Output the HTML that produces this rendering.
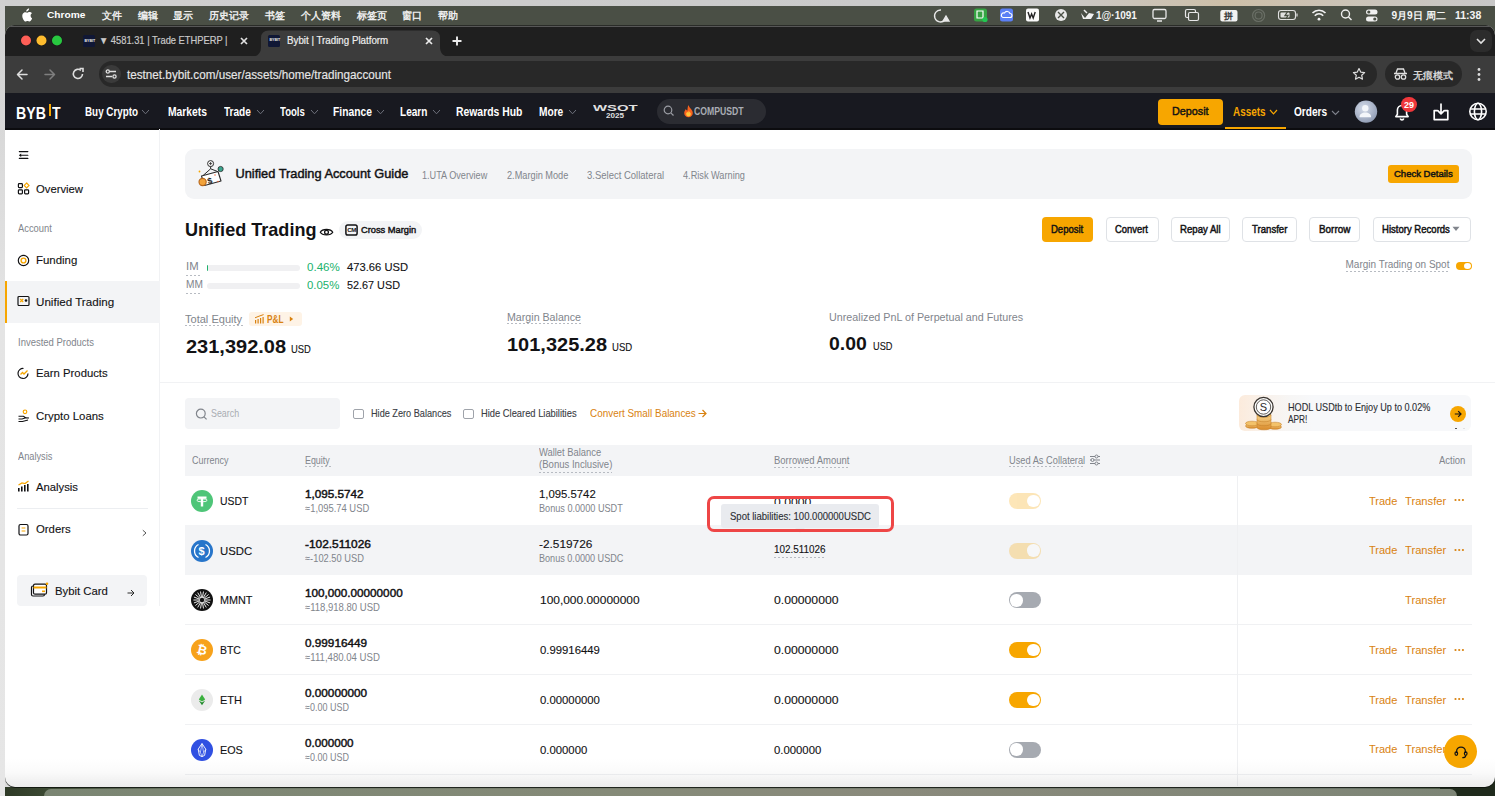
<!DOCTYPE html>
<html><head><meta charset="utf-8"><style>
html,body{margin:0;padding:0;width:1495px;height:796px;overflow:hidden;background:#dcdcdc}
body{position:relative;font-family:"Liberation Sans",sans-serif}
.a{position:absolute}
.t{position:absolute;white-space:nowrap;line-height:1;transform-origin:0 0}
#win{position:absolute;left:5px;top:25px;width:1490px;height:762px;box-shadow:0 1px 0 rgba(10,15,10,.8);border-radius:10px 10px 10px 10px;overflow:hidden;background:#fff}
#in{position:absolute;left:-5px;top:-25px;width:1495px;height:796px}
</style></head><body>
<div class="a" style="left:0px;top:0px;width:1495.00px;height:6.00px;background:linear-gradient(90deg,#cfcfcf,#c9c9c9 70%,#cdbfa8 82%,#c8c8c8);"></div><div class="a" style="left:0px;top:0px;width:5.00px;height:796.00px;background:linear-gradient(180deg,#d0d0d0,#e4e4e4 40%,#e6e6e6);"></div><div class="a" style="left:5px;top:6px;width:1490.00px;height:34.00px;background:#4a4f45;"></div><div class="a" style="left:5px;top:787px;width:1490.00px;height:9.00px;background:linear-gradient(90deg,#2e3a26,#3c4a33 3%,#6f7a69 12%,#7b806f 40%,#777d70 70%,#6d766a 90%,#3a4a30);"></div><div class="a" style="left:1440px;top:760px;width:55.00px;height:36.00px;background:#1f2a1c;"></div><div class="a" style="left:44px;top:789px;width:1413.00px;height:7.00px;background:linear-gradient(90deg,#7a8572,#858a78 40%,#8a8a7c 60%,#7d8576);border-radius:9px 9px 0 0"></div><svg class="a" style="left:20px;top:8px;" width="12" height="14" viewBox="0 0 12 14"><path d="M8.3 2.6c.5-.6.9-1.4.8-2.2-.8 0-1.6.5-2.1 1.1-.5.5-.9 1.3-.8 2.1.8.1 1.6-.4 2.1-1zM10.6 7.6c0-1.5 1.2-2.2 1.3-2.3-.7-1-1.8-1.2-2.2-1.2-.9-.1-1.8.6-2.3.6-.5 0-1.2-.5-2-.5C4.300 4.200 3.300 4.800 2.800 5.700c-1.100 1.900-.3 4.800.8 6.300.5.800 1.100 1.600 1.900 1.600.8 0 1.100-.5 2-.5.9 0 1.200.5 2 .5.8 0 1.300-.8 1.800-1.500.6-.8.8-1.600.8-1.700 0 0-1.500-.6-1.500-2.800z" fill="#fff"/></svg><svg class="a" style="left:0;top:0" width="1495" height="30" viewBox="0 0 1495 30"><g fill="none" stroke="#e8e8e8" stroke-width="1.3"><path d="M941 10a6 6 0 1 0 4 10"/><path d="M943 21l3-5 3 5z" fill="#e8e8e8"/></g><rect x="974" y="8.5" width="13" height="13" rx="2.5" fill="#36a343"/><path d="M977 11h6v7h-6z" fill="none" stroke="#fff" stroke-width="1.2"/><circle cx="985" cy="19.5" r="2.6" fill="#23c552"/><rect x="1000" y="8.5" width="13" height="13" rx="2.5" fill="#5b7ff5"/><path d="M1003 17.5h7a2 2 0 0 0 0-4 3 3 0 0 0-5.5-.5 2.2 2.2 0 0 0-1.5 4.5z" fill="none" stroke="#fff" stroke-width="1.1"/><rect x="1026" y="8.5" width="13" height="13" rx="2" fill="#fafafa"/><path d="M1028 12l2 6 1.6-4 1.6 4 2-6" fill="none" stroke="#222" stroke-width="1.4"/><circle cx="1061" cy="15" r="6" fill="#e8e8e8"/><path d="M1058 12l6 6M1064 12l-6 6" stroke="#4a4f45" stroke-width="1.4"/><path d="M1081 13l4 5 4-5 5 1-3 5h-8z" fill="#f0f0f0"/><path d="M1084 10l3 3" stroke="#f0f0f0" stroke-width="1.5"/><rect x="1153" y="9.5" width="13" height="9" rx="1.5" fill="none" stroke="#e8e8e8" stroke-width="1.3"/><path d="M1157 21h5" stroke="#e8e8e8" stroke-width="1.5"/><rect x="1185.5" y="9.5" width="10" height="8" rx="1.5" fill="none" stroke="#e8e8e8" stroke-width="1.2"/><rect x="1188.5" y="12.5" width="10" height="8" rx="1.5" fill="#4a4f45" stroke="#e8e8e8" stroke-width="1.2"/><rect x="1220.3" y="10" width="17.2" height="11.4" rx="2" fill="#f2f2f2"/><text x="1228.9" y="19" font-size="9" font-weight="700" text-anchor="middle" fill="#333" font-family="Liberation Sans">拼</text><g fill="none" stroke="#6a6f66" stroke-width="1.2"><circle cx="1258.6" cy="15.5" r="6"/><circle cx="1258.6" cy="15.5" r="3.5"/></g><rect x="1278.5" y="10.5" width="17" height="9" rx="2.5" fill="none" stroke="#e0e0e0" stroke-width="1.1"/><rect x="1280.5" y="12.5" width="9" height="5" rx="1" fill="#e0e0e0"/><path d="M1297 13.5v3" stroke="#e0e0e0" stroke-width="1.2"/><path d="M1288 11l-3 4.5h3l-2 3.5" stroke="#4a4f45" stroke-width="1.3" fill="none"/><g fill="none" stroke="#f2f2f2" stroke-width="1.6"><path d="M1312.5 13a9 9 0 0 1 13 0"/><path d="M1314.8 15.7a5.6 5.6 0 0 1 8.4 0"/></g><circle cx="1319" cy="19.2" r="1.4" fill="#f2f2f2"/><g fill="none" stroke="#f0f0f0" stroke-width="1.4"><circle cx="1345.5" cy="14" r="4"/><path d="M1348.5 17l3 3"/></g><g fill="#f0f0f0"><rect x="1366" y="9.5" width="11.5" height="5" rx="2.5"/><rect x="1366" y="16.5" width="11.5" height="5" rx="2.5"/></g><circle cx="1368.8" cy="12" r="1.6" fill="#4a4f45"/><circle cx="1374.8" cy="19" r="1.6" fill="#4a4f45"/></svg><span class="t" style="left:47.10px;top:9px;font-size:9.9px;line-height:11px;color:#ffffff;font-weight:700;transform:scaleX(1.029);">Chrome</span><span class="t" style="left:102.00px;top:10px;font-size:10.2px;line-height:11px;color:#f4f4f4;-webkit-text-stroke:0.35px #f4f4f4;">文件</span><span class="t" style="left:138.00px;top:10px;font-size:10.2px;line-height:11px;color:#f4f4f4;-webkit-text-stroke:0.35px #f4f4f4;">编辑</span><span class="t" style="left:173.40px;top:10px;font-size:10.2px;line-height:11px;color:#f4f4f4;-webkit-text-stroke:0.35px #f4f4f4;">显示</span><span class="t" style="left:208.70px;top:10px;font-size:10.2px;line-height:11px;color:#f4f4f4;-webkit-text-stroke:0.35px #f4f4f4;">历史记录</span><span class="t" style="left:265.00px;top:10px;font-size:10.2px;line-height:11px;color:#f4f4f4;-webkit-text-stroke:0.35px #f4f4f4;">书签</span><span class="t" style="left:300.80px;top:10px;font-size:10.2px;line-height:11px;color:#f4f4f4;-webkit-text-stroke:0.35px #f4f4f4;">个人资料</span><span class="t" style="left:357.30px;top:10px;font-size:10.2px;line-height:11px;color:#f4f4f4;-webkit-text-stroke:0.35px #f4f4f4;">标签页</span><span class="t" style="left:402.20px;top:10px;font-size:10.2px;line-height:11px;color:#f4f4f4;-webkit-text-stroke:0.35px #f4f4f4;">窗口</span><span class="t" style="left:438.20px;top:10px;font-size:10.2px;line-height:11px;color:#f4f4f4;-webkit-text-stroke:0.35px #f4f4f4;">帮助</span><span class="t" style="left:1096.00px;top:10px;font-size:10px;line-height:11px;color:#f4f4f4;font-weight:700;">1@·1091</span><span class="t" style="left:1391.40px;top:10px;font-size:10.2px;line-height:11px;color:#f4f4f4;font-weight:700;">9月9日 周二</span><span class="t" style="left:1454.50px;top:10px;font-size:10px;line-height:11px;color:#f4f4f4;font-weight:700;transform:scaleX(1.049);">11:38</span><div id="win"><div id="in"><div class="a" style="left:5px;top:25px;width:1490.00px;height:31.00px;background:#1f1f1f;"></div><div class="a" style="left:5px;top:25px;width:1490.00px;height:0.80px;background:#2a2c28;"></div><div class="a" style="left:5px;top:25.8px;width:1490.00px;height:1.40px;background:#575757;"></div><div class="a" style="left:5px;top:56px;width:1490.00px;height:36.60px;background:#3c3c3c;"></div><div class="a" style="left:5px;top:92.6px;width:1490.00px;height:37.00px;background:#181920;"></div><div class="a" style="left:5px;top:128px;width:1490.00px;height:1.60px;background:#0c0c0f;"></div><svg class="a" style="left:18px;top:32px;" width="48" height="17" viewBox="0 0 48 17"><circle cx="8" cy="8.5" r="5.5" fill="#1a1a1a"/><circle cx="23.5" cy="8.5" r="5.5" fill="#1a1a1a"/><circle cx="39" cy="8.5" r="5.5" fill="#1a1a1a"/><circle cx="8" cy="8.5" r="5.0" fill="#fe5f57"/><circle cx="23.5" cy="8.5" r="5.0" fill="#febc2e"/><circle cx="39" cy="8.5" r="5.0" fill="#28c840"/></svg><svg class="a" style="left:250px;top:29.5px;" width="210" height="27" viewBox="0 0 210 27"><path d="M0 27 Q11 27 11 17 V8 Q11 0.5 19 0.5 H182 Q190 0.5 190 8 V17 Q190 27 201 27 Z" fill="#3c3c3c"/></svg><div class="a" style="left:83px;top:35px;width:12.00px;height:12.00px;background:#101735;border-radius:1.5px"></div><span class="t" style="left:84.5px;top:39.6px;font-size:3.6px;font-weight:700;color:#e8e8e8">BYBIT</span><div class="a" style="left:268px;top:34.8px;width:12.00px;height:12.00px;background:#101735;border-radius:1.5px"></div><span class="t" style="left:269.5px;top:39.4px;font-size:3.6px;font-weight:700;color:#e8e8e8">BYBIT</span><svg class="a" style="left:238px;top:35px;" width="12" height="12" viewBox="0 0 12 12"><path d="M3 3l6 6M9 3l-6 6" stroke="#e0e0e0" stroke-width="1.7"/></svg><svg class="a" style="left:423px;top:35px;" width="12" height="12" viewBox="0 0 12 12"><path d="M3 3l6 6M9 3l-6 6" stroke="#ececec" stroke-width="1.7"/></svg><svg class="a" style="left:450px;top:34px;" width="14" height="14" viewBox="0 0 14 14"><path d="M7 2.5v9M2.5 7h9" stroke="#eeeeee" stroke-width="1.9"/></svg><div class="a" style="left:1470px;top:30px;width:21.50px;height:22.00px;background:#2c2c2c;border-radius:7px"></div><svg class="a" style="left:1475px;top:36px;" width="12" height="10" viewBox="0 0 12 10"><polyline points="2,3 6,7 10,3" fill="none" stroke="#e0e0e0" stroke-width="1.6"/></svg><svg class="a" style="left:14px;top:67px;" width="60" height="15" viewBox="0 0 60 15"><g fill="none" stroke-width="1.5" stroke-linecap="round" stroke-linejoin="round"><path d="M13 7.5H4M8 3L3.5 7.5 8 12" stroke="#dedede"/><path d="M31 7.5h9M36 3l4.5 4.5L36 12" stroke="#7f7f7f"/></g></svg><svg class="a" style="left:71px;top:66px;" width="14" height="16" viewBox="0 0 14 16"><path d="M11.5 8a4.6 4.6 0 1 1-1.6-3.6" fill="none" stroke="#dedede" stroke-width="1.6"/><path d="M8.5 2.5h3.5v3.5" fill="none" stroke="#dedede" stroke-width="1.6"/></svg><div class="a" style="left:98.6px;top:61.2px;width:1278.40px;height:25.80px;background:#282828;border-radius:13px"></div><div class="a" style="left:102.3px;top:64.8px;width:18.50px;height:18.40px;background:#3a3a3a;border-radius:50%"></div><svg class="a" style="left:105px;top:68px;" width="13" height="12" viewBox="0 0 13 12"><g stroke="#e0e0e0" stroke-width="1.3" fill="none"><path d="M5 3.5h6M1 8.5h6"/><circle cx="2.8" cy="3.5" r="1.6"/><circle cx="9.5" cy="8.5" r="1.6"/></g></svg><svg class="a" style="left:1352px;top:67px;" width="14" height="14" viewBox="0 0 14 14"><path d="M7 1.5l1.7 3.6 3.9.5-2.9 2.7.8 3.9L7 10.3l-3.5 1.9.8-3.9L1.4 5.6l3.9-.5z" fill="none" stroke="#dcdcdc" stroke-width="1.2" stroke-linejoin="round"/></svg><div class="a" style="left:1385px;top:61.2px;width:77.00px;height:25.80px;background:#282828;border-radius:13px"></div><svg class="a" style="left:1393px;top:67px;" width="15" height="14" viewBox="0 0 15 14"><g fill="none" stroke="#e0e0e0" stroke-width="1.3"><path d="M3 6l1.5-4h6L12 6"/><path d="M1 6.5h13"/><circle cx="4.5" cy="10" r="2.2"/><circle cx="10.5" cy="10" r="2.2"/></g></svg><svg class="a" style="left:1476px;top:66px;" width="6" height="18" viewBox="0 0 6 18"><g fill="#dcdcdc"><circle cx="3" cy="3.5" r="1.4"/><circle cx="3" cy="8.5" r="1.4"/><circle cx="3" cy="13.5" r="1.4"/></g></svg><div class="a" style="left:48.6px;top:104px;width:2.30px;height:12.00px;background:#f7a600;"></div><svg class="a" style="left:141px;top:108.6px;" width="9" height="5.8" viewBox="0 0 9 5.8"><polyline points="1,1 4.5,4.8 8,1" fill="none" stroke="#6e717b" stroke-width="1.0"/></svg><svg class="a" style="left:256px;top:108.6px;" width="9" height="5.8" viewBox="0 0 9 5.8"><polyline points="1,1 4.5,4.8 8,1" fill="none" stroke="#6e717b" stroke-width="1.0"/></svg><svg class="a" style="left:310px;top:108.6px;" width="9" height="5.8" viewBox="0 0 9 5.8"><polyline points="1,1 4.5,4.8 8,1" fill="none" stroke="#6e717b" stroke-width="1.0"/></svg><svg class="a" style="left:376px;top:108.6px;" width="9" height="5.8" viewBox="0 0 9 5.8"><polyline points="1,1 4.5,4.8 8,1" fill="none" stroke="#6e717b" stroke-width="1.0"/></svg><svg class="a" style="left:432px;top:108.6px;" width="9" height="5.8" viewBox="0 0 9 5.8"><polyline points="1,1 4.5,4.8 8,1" fill="none" stroke="#6e717b" stroke-width="1.0"/></svg><svg class="a" style="left:568px;top:108.6px;" width="9" height="5.8" viewBox="0 0 9 5.8"><polyline points="1,1 4.5,4.8 8,1" fill="none" stroke="#6e717b" stroke-width="1.0"/></svg><div class="a" style="left:657px;top:99px;width:108.50px;height:25.00px;background:#2b2c32;border-radius:12.5px"></div><svg class="a" style="left:663px;top:105px;" width="12" height="12" viewBox="0 0 12 12"><circle cx="5" cy="5" r="3.8" fill="none" stroke="#9b9da4" stroke-width="1.2"/><path d="M7.8 7.8l2.7 2.7" stroke="#9b9da4" stroke-width="1.2"/></svg><svg class="a" style="left:683px;top:104px;" width="11" height="14" viewBox="0 0 11 14"><path d="M5.5 1C6 4 9.8 5.5 9.8 9a4.3 4.3 0 0 1-8.6 0c0-2 1.2-3 1.6-4 .5 1.2 1.2 1.6 1.6 1.6C4.600 5 4.600 2.500 5.500 1z" fill="#f7611e"/><path d="M5.5 6.5c.4 1.2 2.4 2 2.4 3.6a2.4 2.4 0 0 1-4.8 0c0-1.200.9-1.600 1.200-2.300.3.600.8.800 1.200.600z" fill="#ffc53a"/></svg><div class="a" style="left:1158px;top:98.8px;width:64.60px;height:25.80px;background:#f7a600;border-radius:4px"></div><svg class="a" style="left:1269px;top:108.8px;" width="9" height="5.8" viewBox="0 0 9 5.8"><polyline points="1,1 4.5,4.8 8,1" fill="none" stroke="#f7a600" stroke-width="1.2"/></svg><svg class="a" style="left:1330.5px;top:110px;" width="9" height="5.5" viewBox="0 0 9 5.5"><polyline points="1,1 4.5,4.5 8,1" fill="none" stroke="#7d808a" stroke-width="1.1"/></svg><div class="a" style="left:1225px;top:127px;width:61.00px;height:2.00px;background:#f7a600;"></div><svg class="a" style="left:1354px;top:100px;" width="24" height="24" viewBox="0 0 24 24"><defs><radialGradient id="av" cx="40%" cy="35%" r="70%"><stop offset="0" stop-color="#d5dcea"/><stop offset="1" stop-color="#8f9bb3"/></radialGradient></defs><circle cx="12" cy="11.6" r="11.2" fill="url(#av)"/><circle cx="11.3" cy="8.2" r="3.2" fill="#f4f6fa"/><path d="M5.5 17.2c0-3 2.6-4.6 5.8-4.6s5.8 1.600 5.800 4.600z" fill="#f4f6fa"/></svg><svg class="a" style="left:1393px;top:102px;" width="18" height="20" viewBox="0 0 18 20"><path d="M9 3.5a4.6 4.6 0 0 0-4.6 4.6v4.2L2.8 14.6h12.400L13.600 12.300V8.100A4.600 4.600 0 0 0 9 3.500z" fill="none" stroke="#fff" stroke-width="1.6" stroke-linejoin="round"/><path d="M7.200 16.600a1.900 1.900 0 0 0 3.600 0" fill="none" stroke="#fff" stroke-width="1.6"/></svg><div class="a" style="left:1401.2px;top:96.6px;width:15.60px;height:15.60px;background:#f0373b;border-radius:50%"></div><svg class="a" style="left:1431px;top:102px;" width="20" height="20" viewBox="0 0 20 20"><g fill="none" stroke="#fff" stroke-width="1.7" stroke-linejoin="round" stroke-linecap="round"><path d="M6 8.6H3.2v9h13.600v-9H14"/><path d="M10 2.2v9.6M6.800 8.600L10 11.800l3.200-3.200"/></g></svg><svg class="a" style="left:1468px;top:101px;" width="20" height="21" viewBox="0 0 20 21"><g fill="none" stroke="#fff" stroke-width="1.6"><circle cx="10" cy="10.5" r="8.2"/><ellipse cx="10" cy="10.5" rx="3.6" ry="8.2"/><path d="M2 8h16M2 13h16"/></g></svg><div class="a" style="left:159.3px;top:128.6px;width:1.00px;height:477.40px;background:#f1f2f4;"></div><svg class="a" style="left:17px;top:149px;" width="13" height="12" viewBox="0 0 13 12"><g stroke="#121214" stroke-width="1.1" fill="none" stroke-linecap="round"><path d="M2.3 2.600h8.600M3.500 6.200h7.400M2.300 9.400h8.600"/></g><path d="M1.800 6.200L4.200 4.500V7.900z" fill="#121214"/></svg><svg class="a" style="left:17px;top:182px;" width="13" height="13" viewBox="0 0 13 13"><g fill="none" stroke-width="1.2"><rect x="1.4" y="1.6" width="4" height="4" rx=".8" stroke="#121214"/><rect x="1.4" y="7.8" width="4" height="4" rx=".8" stroke="#121214"/><rect x="7.6" y="7.8" width="4" height="4" rx=".8" stroke="#121214"/><path d="M9.6 1l2.400 2.400-2.400 2.400-2.400-2.400z" stroke="#f7a600"/></g></svg><svg class="a" style="left:17px;top:254px;" width="13" height="13" viewBox="0 0 13 13"><circle cx="6.5" cy="6.5" r="5.2" fill="none" stroke="#121214" stroke-width="1.2"/><circle cx="6.5" cy="6.5" r="2.4" fill="none" stroke="#f7a600" stroke-width="1.4"/></svg><div class="a" style="left:5px;top:280.7px;width:155.00px;height:42.30px;background:#f3f4f6;"></div><div class="a" style="left:5px;top:280.7px;width:2.20px;height:42.30px;background:#f7a600;"></div><svg class="a" style="left:17px;top:295px;" width="13" height="12" viewBox="0 0 13 12"><rect x="1" y="1.5" width="11" height="9" rx="1" fill="none" stroke="#121214" stroke-width="1.2"/><path d="M3.2 4l3 3M6.2 4l-3 3" stroke="#f7a600" stroke-width="1.2"/><circle cx="9" cy="5.5" r="1.3" fill="#121214"/></svg><svg class="a" style="left:17px;top:367px;" width="13" height="13" viewBox="0 0 13 13"><path d="M11 6.5A5 5 0 1 1 6.5 1.5" fill="none" stroke="#121214" stroke-width="1.2"/><path d="M3.5 7.5l2-2 1.5 1.5 3.5-3.5" fill="none" stroke="#f7a600" stroke-width="1.3"/></svg><svg class="a" style="left:17px;top:409px;" width="14" height="14" viewBox="0 0 14 14"><circle cx="8" cy="2.8" r="1.8" fill="none" stroke="#f7a600" stroke-width="1.2"/><path d="M1.5 7.2h5l2 1.5M1.5 10h3.500l4-1.300 3 .300M1.500 12.500h4l5.500-1.500" fill="none" stroke="#121214" stroke-width="1.1"/></svg><svg class="a" style="left:17px;top:480px;" width="13" height="13" viewBox="0 0 13 13"><g fill="#121214"><rect x="1" y="8" width="1.6" height="3.5"/><rect x="4" y="6.5" width="1.6" height="5"/><rect x="7" y="5" width="1.6" height="6.5"/><rect x="10" y="4" width="1.6" height="7.5"/></g><path d="M1.5 5L5 3 8 3.5 11.5 1" fill="none" stroke="#f7a600" stroke-width="1.2"/></svg><div class="a" style="left:17.4px;top:508px;width:130.60px;height:1.00px;background:#eceef1;"></div><svg class="a" style="left:17px;top:523px;" width="13" height="13" viewBox="0 0 13 13"><rect x="2" y="1.5" width="9" height="10.5" rx="1.5" fill="none" stroke="#121214" stroke-width="1.2"/><path d="M4.6 5h3.8M4.6 8h3.8" stroke="#f7a600" stroke-width="1.2"/></svg><svg class="a" style="left:141px;top:528.5px;" width="7" height="8" viewBox="0 0 7 8"><polyline points="1.8,1.2 5,4 1.8,6.8" fill="none" stroke="#555" stroke-width="1"/></svg><div class="a" style="left:17.4px;top:575.3px;width:129.40px;height:30.60px;background:#f3f4f6;border-radius:4px"></div><svg class="a" style="left:30px;top:582px;" width="19" height="16" viewBox="0 0 19 16"><rect x="1.5" y="4" width="13" height="10" rx="1.5" fill="#fff" stroke="#121214" stroke-width="1.2"/><rect x="3.5" y="2.2" width="13" height="10" rx="1.5" fill="#fff" stroke="#121214" stroke-width="1.2"/><path d="M3.5 5.5h13" stroke="#f7a600" stroke-width="2"/><circle cx="17" cy="1.8" r="1.3" fill="#f7a600"/><rect x="12" y="8.5" width="3" height="1.6" fill="#f7a600"/></svg><svg class="a" style="left:126px;top:587.7px;" width="10" height="10" viewBox="0 0 10 10"><path d="M1.5 5h6.5M5 2l3 3-3 3" fill="none" stroke="#2a2a2a" stroke-width="1"/></svg><div class="a" style="left:185px;top:149.3px;width:1286.50px;height:49.60px;background:#f3f4f6;border-radius:9px"></div><svg class="a" style="left:195px;top:157px;" width="30" height="32" viewBox="0 0 30 32"><path d="M6.5 19l16.500-4.500 3 9.500-16.500 4.500z" fill="#fff" stroke="#2a2a2a" stroke-width="1.1" stroke-linejoin="round"/><path d="M8 18.600l7.600-6.800 7 2.700" fill="none" stroke="#2a2a2a" stroke-width="1"/><text x="12.2" y="26.6" font-size="8.5" font-weight="700" fill="#222" font-family="Liberation Sans" transform="rotate(-15 15 23)">$</text><circle cx="15.6" cy="6.6" r="3" fill="#fff" stroke="#2a2a2a" stroke-width="1"/><path d="M15.600 5v3.200M14 6.600h3.200" stroke="#2a2a2a" stroke-width=".8"/><path d="M15.600 9.600v2.200" stroke="#2a2a2a" stroke-width="1"/><circle cx="25.6" cy="12" r="2.600" fill="#3aa58f" stroke="#2a2a2a" stroke-width=".8"/><circle cx="7.6" cy="25" r="3.600" fill="#f2a33a" stroke="#b5651a" stroke-width="1.1"/><circle cx="4.500" cy="14.500" r=".9" fill="#f7a600"/><circle cx="20" cy="18" r=".7" fill="#f05a28"/><circle cx="23" cy="24.500" r=".7" fill="#f05a28"/></svg><div class="a" style="left:1388px;top:164.7px;width:71.10px;height:18.00px;background:#f7a600;border-radius:3px"></div><svg class="a" style="left:319px;top:226px;" width="15" height="12" viewBox="0 0 15 12"><path d="M1.3 6.2C3.300 2.600 11.700 2.600 13.700 6.200 11.700 9.800 3.300 9.800 1.300 6.200z" fill="none" stroke="#121214" stroke-width="1.3"/><circle cx="7.5" cy="6.2" r="1.9" fill="none" stroke="#121214" stroke-width="1.3"/></svg><div class="a" style="left:338.6px;top:220.7px;width:83.40px;height:18.30px;background:#f3f4f6;border-radius:9px"></div><svg class="a" style="left:344.5px;top:223.5px;" width="13" height="12" viewBox="0 0 13 12"><rect x="0.9" y="0.9" width="11.2" height="10.2" rx="1.8" fill="none" stroke="#121214" stroke-width="1.5"/><text x="6.5" y="8.4" text-anchor="middle" font-size="6.2" font-weight="700" fill="#121214" font-family="Liberation Sans" letter-spacing="-0.5">CM</text></svg><div class="a" style="left:1041.5px;top:217.4px;width:51.80px;height:24.30px;background:#f7a600;border-radius:4px"></div><div class="a" style="left:1106px;top:217.4px;width:52.80px;height:24.30px;background:#fff;border-radius:4px;box-sizing:border-box;border:1px solid #dfe2e6"></div><div class="a" style="left:1171.3px;top:217.4px;width:58.40px;height:24.30px;background:#fff;border-radius:4px;box-sizing:border-box;border:1px solid #dfe2e6"></div><div class="a" style="left:1242.4px;top:217.4px;width:54.30px;height:24.30px;background:#fff;border-radius:4px;box-sizing:border-box;border:1px solid #dfe2e6"></div><div class="a" style="left:1309.3px;top:217.4px;width:50.30px;height:24.30px;background:#fff;border-radius:4px;box-sizing:border-box;border:1px solid #dfe2e6"></div><div class="a" style="left:1372.5px;top:217.4px;width:98.80px;height:24.30px;background:#fff;border-radius:4px;box-sizing:border-box;border:1px solid #dfe2e6"></div><svg class="a" style="left:1452px;top:226px;" width="8" height="6" viewBox="0 0 8 6"><path d="M0.5 0.8h7L4 5z" fill="#81858c"/></svg><div class="a" style="left:1345.5px;top:271px;width:104.50px;height:1px;background:repeating-linear-gradient(90deg,#b7bbc2 0 2px,transparent 2px 4px)"></div><div class="a" style="left:1455.8px;top:261.6px;width:16.00px;height:8.20px;background:#f7a600;border-radius:4.1px"></div><div class="a" style="left:1463.6px;top:262.5px;width:7.30px;height:6.40px;background:#fff;border-radius:50%"></div><div class="a" style="left:206.8px;top:264.7px;width:93.20px;height:6.20px;background:#f0f0f2;border-radius:3.1px"></div><div class="a" style="left:206.8px;top:282.6px;width:93.20px;height:6.20px;background:#f0f0f2;border-radius:3.1px"></div><div class="a" style="left:206.8px;top:264.7px;width:1.50px;height:6.20px;background:#20b26c;border-radius:3px 0 0 3px"></div><div class="a" style="left:186px;top:275.4px;width:16.00px;height:1px;background:repeating-linear-gradient(90deg,#b7bbc2 0 2px,transparent 2px 4px)"></div><div class="a" style="left:186px;top:293.4px;width:16.00px;height:1px;background:repeating-linear-gradient(90deg,#b7bbc2 0 2px,transparent 2px 4px)"></div><div class="a" style="left:185.4px;top:324.6px;width:57.20px;height:1px;background:repeating-linear-gradient(90deg,#b7bbc2 0 2px,transparent 2px 4px)"></div><div class="a" style="left:249.3px;top:312px;width:53.10px;height:13.70px;background:#fef3e6;border-radius:3px"></div><svg class="a" style="left:254px;top:314px;" width="12" height="10" viewBox="0 0 12 10"><g fill="#d98210"><rect x="1" y="6" width="1.2" height="3.5"/><rect x="3.5" y="5" width="1.2" height="4.5"/><rect x="6" y="4" width="1.2" height="5.5"/><rect x="8.5" y="3" width="1.2" height="6.5"/></g><path d="M1 3.8L5 2.2 9.600 .6" fill="none" stroke="#d98210" stroke-width="1"/></svg><svg class="a" style="left:289px;top:316px;" width="5" height="6" viewBox="0 0 5 6"><path d="M0.8 0.5v5L4.2 3z" fill="#d98210"/></svg><div class="a" style="left:507.4px;top:323.4px;width:73.90px;height:1px;background:repeating-linear-gradient(90deg,#b7bbc2 0 2px,transparent 2px 4px)"></div><div class="a" style="left:160.3px;top:382px;width:1334.70px;height:1.00px;background:#f1f2f4;"></div><div class="a" style="left:185.3px;top:398.3px;width:155.00px;height:30.60px;background:#f3f4f6;border-radius:4px"></div><svg class="a" style="left:195px;top:408px;" width="13" height="13" viewBox="0 0 13 13"><circle cx="5.8" cy="5.6" r="4.4" fill="none" stroke="#81858c" stroke-width="1.2"/><path d="M9 8.8l2.6 2.6" stroke="#81858c" stroke-width="1.2"/></svg><div class="a" style="left:353.1px;top:408.5px;width:10.80px;height:10.70px;background:#fff;border-radius:2px;box-sizing:border-box;border:1px solid #9fa3aa"></div><div class="a" style="left:463.2px;top:408.5px;width:10.80px;height:10.70px;background:#fff;border-radius:2px;box-sizing:border-box;border:1px solid #9fa3aa"></div><svg class="a" style="left:697px;top:408px;" width="11" height="11" viewBox="0 0 11 11"><path d="M1.5 5.5h7.5M5.5 2l3.5 3.500L5.500 9" fill="none" stroke="#d98210" stroke-width="1.2"/></svg><div class="a" style="left:1238.7px;top:395.3px;width:232.50px;height:36.20px;background:linear-gradient(90deg,#fcebdc 0,#f9f1ea 10%,#f7f6f5 22%,#f7f8fa 32%,#f7f8fa 100%);border-radius:6px"></div><svg class="a" style="left:1244px;top:396px;" width="40" height="36" viewBox="0 0 40 36"><defs><linearGradient id="gc" x1="0" y1="0" x2="0" y2="1"><stop offset="0" stop-color="#f8d48a"/><stop offset="1" stop-color="#d98a2a"/></linearGradient></defs><g stroke="#c07a22" stroke-width=".5"><ellipse cx="8" cy="30" rx="6.500" ry="2.300" fill="url(#gc)"/><ellipse cx="8" cy="27.500" rx="6.500" ry="2.300" fill="#f3c26a"/><ellipse cx="31" cy="31" rx="6.500" ry="2.300" fill="url(#gc)"/><ellipse cx="31" cy="28.500" rx="6.500" ry="2.300" fill="#f3c26a"/><path d="M13 19h14v12.500a7 2.300 0 0 1-14 0z" fill="url(#gc)"/><ellipse cx="20" cy="19" rx="7" ry="2.300" fill="#f8d080"/><path d="M13 23.500a7 2.300 0 0 0 14 0M13 27.500a7 2.300 0 0 0 14 0" fill="none"/></g><circle cx="19.500" cy="11" r="9.600" fill="#fdfdfd" stroke="#3a3530" stroke-width="1.300"/><circle cx="19.500" cy="11" r="7.200" fill="none" stroke="#3a3530" stroke-width=".8"/><text x="15.800" y="15.200" font-size="11" fill="#2a2a2a" font-family="Liberation Sans">S</text></svg><div class="a" style="left:1449.5px;top:405.5px;width:16.00px;height:16.00px;background:#f7a600;border-radius:50%"></div><svg class="a" style="left:1452.5px;top:408.5px;" width="10" height="10" viewBox="0 0 10 10"><path d="M1.8 5h6.2M5.2 2.2L8 5 5.200 7.800" fill="none" stroke="#121214" stroke-width="1.2"/></svg><div class="a" style="left:1455px;top:427.6px;width:2.00px;height:1.60px;background:#333;border-radius:50%"></div><div class="a" style="left:1463px;top:427.6px;width:2.00px;height:1.60px;background:#ddd;border-radius:50%"></div><div class="a" style="left:185.2px;top:444.9px;width:1286.60px;height:30.70px;background:#f3f4f6;"></div><div class="a" style="left:305.2px;top:466px;width:25.40px;height:1px;background:repeating-linear-gradient(90deg,#b7bbc2 0 2px,transparent 2px 4px)"></div><div class="a" style="left:539.3px;top:472.3px;width:73.00px;height:1px;background:repeating-linear-gradient(90deg,#b7bbc2 0 2px,transparent 2px 4px)"></div><div class="a" style="left:774.2px;top:466.6px;width:76.00px;height:1px;background:repeating-linear-gradient(90deg,#b7bbc2 0 2px,transparent 2px 4px)"></div><div class="a" style="left:1008.9px;top:466px;width:76.40px;height:1px;background:repeating-linear-gradient(90deg,#b7bbc2 0 2px,transparent 2px 4px)"></div><svg class="a" style="left:1089px;top:454px;" width="12" height="12" viewBox="0 0 12 12"><g stroke="#81858c" stroke-width="1" fill="none"><path d="M1 2.5h10M1 6h10M1 9.5h10"/><circle cx="7.5" cy="2.5" r="1.5" fill="#f3f4f6"/><circle cx="3.5" cy="6" r="1.5" fill="#f3f4f6"/><circle cx="7.5" cy="9.5" r="1.5" fill="#f3f4f6"/></g></svg><div class="a" style="left:185.2px;top:525.35px;width:1286.60px;height:49.75px;background:#f3f4f6;"></div><div class="a" style="left:185.2px;top:624.35px;width:1286.60px;height:1.00px;background:#f0f1f3;"></div><div class="a" style="left:185.2px;top:674.1px;width:1286.60px;height:1.00px;background:#f0f1f3;"></div><div class="a" style="left:185.2px;top:723.85px;width:1286.60px;height:1.00px;background:#f0f1f3;"></div><div class="a" style="left:185.2px;top:773.6px;width:1286.60px;height:1.00px;background:#f0f1f3;"></div><div class="a" style="left:1237px;top:475.6px;width:1.00px;height:310.40px;background:#eff0f2;"></div><svg class="a" style="left:191px;top:489.8px;" width="22" height="22" viewBox="0 0 22 22"><circle cx="11" cy="11" r="11" fill="#4ec578"/><path d="M6.5 6.6h9v2.2h-3.3v7.800h-2.400V8.800H6.500z" fill="#fff"/><ellipse cx="11" cy="10.3" rx="5.2" ry="1.5" fill="none" stroke="#fff" stroke-width=".9"/></svg><svg class="a" style="left:191px;top:539.5500000000001px;" width="22" height="22" viewBox="0 0 22 22"><circle cx="11" cy="11" r="11" fill="#2775ca"/><path d="M7.5 4.5a7.3 7.3 0 0 0 0 13M14.5 4.5a7.300 7.300 0 0 1 0 13" fill="none" stroke="#fff" stroke-width="1.3"/><circle cx="11" cy="11" r="5.8" fill="none" stroke="#fff" stroke-width="0"/><text x="7.6" y="15.2" font-size="11" font-weight="700" fill="#fff" font-family="Liberation Sans">$</text></svg><svg class="a" style="left:191px;top:589.3000000000001px;" width="22" height="22" viewBox="0 0 22 22"><circle cx="11" cy="11" r="11" fill="#111"/><path d="M11 11L19.60 11.00" stroke="#fff" stroke-width=".9"/><path d="M11 11L19.08 13.94" stroke="#fff" stroke-width=".9"/><path d="M11 11L17.59 16.53" stroke="#fff" stroke-width=".9"/><path d="M11 11L15.30 18.45" stroke="#fff" stroke-width=".9"/><path d="M11 11L12.50 19.47" stroke="#fff" stroke-width=".9"/><path d="M11 11L9.51 19.47" stroke="#fff" stroke-width=".9"/><path d="M11 11L6.70 18.45" stroke="#fff" stroke-width=".9"/><path d="M11 11L4.41 16.53" stroke="#fff" stroke-width=".9"/><path d="M11 11L2.92 13.95" stroke="#fff" stroke-width=".9"/><path d="M11 11L2.40 11.01" stroke="#fff" stroke-width=".9"/><path d="M11 11L2.92 8.06" stroke="#fff" stroke-width=".9"/><path d="M11 11L4.41 5.48" stroke="#fff" stroke-width=".9"/><path d="M11 11L6.69 3.56" stroke="#fff" stroke-width=".9"/><path d="M11 11L9.50 2.53" stroke="#fff" stroke-width=".9"/><path d="M11 11L12.49 2.53" stroke="#fff" stroke-width=".9"/><path d="M11 11L15.29 3.55" stroke="#fff" stroke-width=".9"/><path d="M11 11L17.58 5.47" stroke="#fff" stroke-width=".9"/><path d="M11 11L19.08 8.05" stroke="#fff" stroke-width=".9"/><circle cx="11" cy="11" r="2.2" fill="#111"/></svg><svg class="a" style="left:191px;top:639.0500000000001px;" width="22" height="22" viewBox="0 0 22 22"><circle cx="11" cy="11" r="11" fill="#f7a21b"/><text x="11" y="15.2" text-anchor="middle" font-size="12.5" font-weight="700" fill="#fff" font-family="Liberation Sans" transform="rotate(14 11 11)">₿</text></svg><svg class="a" style="left:191px;top:688.8000000000001px;" width="22" height="22" viewBox="0 0 22 22"><circle cx="11" cy="11" r="11" fill="#ebebeb"/><path d="M11 5.5l3.2 5-3.200 2-3.200-2z" fill="#3ab03e"/><path d="M7.8 11.4l3.2 2 3.2-2L11 16.200z" fill="#1f8a2a"/></svg><svg class="a" style="left:191px;top:738.5500000000001px;" width="22" height="22" viewBox="0 0 22 22"><circle cx="11" cy="11" r="11" fill="#3050e2"/><path d="M11 4.600L14.800 10.200 13.600 16.400 11 17.600 8.400 16.400 7.200 10.200z" fill="none" stroke="#fff" stroke-width=".9" stroke-linejoin="round"/><path d="M11 4.600L9.400 13.400 11 17.600 12.600 13.400z M7.200 10.200L9.400 13.400M14.800 10.200L12.600 13.400" fill="none" stroke="#fff" stroke-width=".6"/></svg><div class="a" style="left:1008.6px;top:492.90px;width:32.6px;height:16px;border-radius:8px;background:#f7a600;opacity:.28"><div class="a" style="left:18.6px;top:1.8px;width:12.4px;height:12.4px;border-radius:50%;background:#fff"></div></div><div class="a" style="left:1008.6px;top:542.65px;width:32.6px;height:16px;border-radius:8px;background:#f7a600;opacity:.28"><div class="a" style="left:18.6px;top:1.8px;width:12.4px;height:12.4px;border-radius:50%;background:#fff"></div></div><div class="a" style="left:1008.6px;top:592.40px;width:32.6px;height:16px;border-radius:8px;background:#a6aab1"><div class="a" style="left:1.8px;top:1.8px;width:12.4px;height:12.4px;border-radius:50%;background:#fff"></div></div><div class="a" style="left:1008.6px;top:642.15px;width:32.6px;height:16px;border-radius:8px;background:#f7a600"><div class="a" style="left:18.6px;top:1.8px;width:12.4px;height:12.4px;border-radius:50%;background:#fff"></div></div><div class="a" style="left:1008.6px;top:691.90px;width:32.6px;height:16px;border-radius:8px;background:#f7a600"><div class="a" style="left:18.6px;top:1.8px;width:12.4px;height:12.4px;border-radius:50%;background:#fff"></div></div><div class="a" style="left:1008.6px;top:741.65px;width:32.6px;height:16px;border-radius:8px;background:#a6aab1"><div class="a" style="left:1.8px;top:1.8px;width:12.4px;height:12.4px;border-radius:50%;background:#fff"></div></div><svg class="a" style="left:1454px;top:498.3px;" width="12" height="4" viewBox="0 0 12 4"><g fill="#d98210"><circle cx="1.5" cy="2" r="1.1"/><circle cx="5.2" cy="2" r="1.1"/><circle cx="8.9" cy="2" r="1.1"/></g></svg><svg class="a" style="left:1454px;top:548.0500000000001px;" width="12" height="4" viewBox="0 0 12 4"><g fill="#d98210"><circle cx="1.5" cy="2" r="1.1"/><circle cx="5.2" cy="2" r="1.1"/><circle cx="8.9" cy="2" r="1.1"/></g></svg><svg class="a" style="left:1454px;top:647.5500000000001px;" width="12" height="4" viewBox="0 0 12 4"><g fill="#d98210"><circle cx="1.5" cy="2" r="1.1"/><circle cx="5.2" cy="2" r="1.1"/><circle cx="8.9" cy="2" r="1.1"/></g></svg><svg class="a" style="left:1454px;top:697.3000000000001px;" width="12" height="4" viewBox="0 0 12 4"><g fill="#d98210"><circle cx="1.5" cy="2" r="1.1"/><circle cx="5.2" cy="2" r="1.1"/><circle cx="8.9" cy="2" r="1.1"/></g></svg><svg class="a" style="left:1454px;top:747.0500000000001px;" width="12" height="4" viewBox="0 0 12 4"><g fill="#d98210"><circle cx="1.5" cy="2" r="1.1"/><circle cx="5.2" cy="2" r="1.1"/><circle cx="8.9" cy="2" r="1.1"/></g></svg><div class="a" style="left:774.2px;top:557px;width:51.20px;height:1px;background:repeating-linear-gradient(90deg,#b7bbc2 0 2px,transparent 2px 4px)"></div><span class="t" style="left:774.0px;top:496px;font-size:11.5px;line-height:13px;color:#121214;transform:scaleX(1.06)">0.0000</span><div class="a" style="left:720.7px;top:504.1px;width:158.60px;height:23.70px;background:#e9ebef;border-radius:3px"></div><svg class="a" style="left:794px;top:527px;" width="12" height="7" viewBox="0 0 12 7"><path d="M0 0h12L6 6z" fill="#e9ebef"/></svg><span class="t" style="left:99.17px;top:35px;font-size:10.2px;line-height:11px;color:#c9c9c9;transform:scaleX(0.916);-webkit-text-stroke:0.2px #c9c9c9;">▼ 4581.31 | Trade ETHPERP |</span><span class="t" style="left:286.60px;top:34px;font-size:10.6px;line-height:12px;color:#eeeeee;transform:scaleX(0.921);-webkit-text-stroke:0.2px #eeeeee;">Bybit | Trading Platform</span><span class="t" style="left:126.90px;top:68px;font-size:12px;line-height:14px;color:#e6e6e6;transform:scaleX(0.975);-webkit-text-stroke:0.15px #e6e6e6;">testnet.bybit.com/user/assets/home/tradingaccount</span><span class="t" style="left:1412.80px;top:70px;font-size:10.2px;line-height:11px;color:#e6e6e6;-webkit-text-stroke:0.25px #e6e6e6;">无痕模式</span><span class="t" style="left:15.64px;top:104px;font-size:16.5px;line-height:18px;color:#ffffff;font-weight:700;transform:scaleX(0.858);">BYB</span><span class="t" style="left:52.10px;top:104px;font-size:16.5px;line-height:18px;color:#ffffff;font-weight:700;transform:scaleX(0.850);">T</span><span class="t" style="left:84.50px;top:105px;font-size:12.3px;line-height:14px;color:#ffffff;font-weight:700;transform:scaleX(0.801);">Buy Crypto</span><span class="t" style="left:167.70px;top:105px;font-size:12.3px;line-height:14px;color:#ffffff;font-weight:700;transform:scaleX(0.838);">Markets</span><span class="t" style="left:224.00px;top:105px;font-size:12.3px;line-height:14px;color:#ffffff;font-weight:700;transform:scaleX(0.819);">Trade</span><span class="t" style="left:279.50px;top:105px;font-size:12.3px;line-height:14px;color:#ffffff;font-weight:700;transform:scaleX(0.780);">Tools</span><span class="t" style="left:333.00px;top:105px;font-size:12.3px;line-height:14px;color:#ffffff;font-weight:700;transform:scaleX(0.836);">Finance</span><span class="t" style="left:400.00px;top:105px;font-size:12.3px;line-height:14px;color:#ffffff;font-weight:700;transform:scaleX(0.819);">Learn</span><span class="t" style="left:456.00px;top:105px;font-size:12.3px;line-height:14px;color:#ffffff;font-weight:700;transform:scaleX(0.845);">Rewards Hub</span><span class="t" style="left:538.60px;top:105px;font-size:12.3px;line-height:14px;color:#ffffff;font-weight:700;transform:scaleX(0.826);">More</span><span class="t" style="left:593.00px;top:103px;font-size:8.3px;line-height:10px;color:#e0e0e0;font-weight:700;transform:scaleX(1.793);">WSOT</span><span class="t" style="left:606.00px;top:111px;font-size:8px;line-height:9px;color:#e0e0e0;font-weight:700;transform:scaleX(1.008);">2025</span><span class="t" style="left:694.00px;top:105px;font-size:10.6px;line-height:12px;color:#a9acb4;font-weight:700;transform:scaleX(0.818);">COMPUSDT</span><span class="t" style="left:1172.00px;top:105px;font-size:11.3px;line-height:12px;color:#121214;-webkit-text-stroke:0.45px #121214;transform:scaleX(0.955);">Deposit</span><span class="t" style="left:1233.00px;top:105px;font-size:12.3px;line-height:14px;color:#f7a600;font-weight:700;transform:scaleX(0.808);">Assets</span><span class="t" style="left:1293.70px;top:105px;font-size:12.3px;line-height:14px;color:#ffffff;font-weight:700;transform:scaleX(0.823);">Orders</span><span class="t" style="left:1404.00px;top:100px;font-size:9px;line-height:10px;color:#ffffff;font-weight:700;">29</span><span class="t" style="left:36.00px;top:183px;font-size:11.4px;line-height:12px;color:#121214;-webkit-text-stroke:0.12px #121214;transform:scaleX(0.989);">Overview</span><span class="t" style="left:17.50px;top:223px;font-size:10.2px;line-height:11px;color:#81858c;transform:scaleX(0.919);">Account</span><span class="t" style="left:36.00px;top:254px;font-size:11.4px;line-height:12px;color:#121214;-webkit-text-stroke:0.12px #121214;transform:scaleX(1.004);">Funding</span><span class="t" style="left:36.00px;top:296px;font-size:11.4px;line-height:12px;color:#121214;-webkit-text-stroke:0.12px #121214;transform:scaleX(1.020);">Unified Trading</span><span class="t" style="left:17.60px;top:337px;font-size:10.2px;line-height:11px;color:#81858c;transform:scaleX(0.932);">Invested Products</span><span class="t" style="left:36.00px;top:367px;font-size:11.4px;line-height:12px;color:#121214;-webkit-text-stroke:0.12px #121214;transform:scaleX(0.993);">Earn Products</span><span class="t" style="left:36.00px;top:410px;font-size:11.4px;line-height:12px;color:#121214;-webkit-text-stroke:0.12px #121214;">Crypto Loans</span><span class="t" style="left:17.50px;top:451px;font-size:10.2px;line-height:11px;color:#81858c;transform:scaleX(0.906);">Analysis</span><span class="t" style="left:36.00px;top:481px;font-size:11.4px;line-height:12px;color:#121214;-webkit-text-stroke:0.12px #121214;transform:scaleX(0.990);">Analysis</span><span class="t" style="left:36.00px;top:523px;font-size:11.4px;line-height:12px;color:#121214;-webkit-text-stroke:0.12px #121214;transform:scaleX(0.997);">Orders</span><span class="t" style="left:55.40px;top:585px;font-size:11.4px;line-height:12px;color:#121214;-webkit-text-stroke:0.12px #121214;transform:scaleX(0.995);">Bybit Card</span><span class="t" style="left:235.50px;top:166px;font-size:12.8px;line-height:15px;color:#121214;-webkit-text-stroke:0.45px #121214;">Unified Trading Account Guide</span><span class="t" style="left:422.20px;top:169px;font-size:10.5px;line-height:12px;color:#81858c;transform:scaleX(0.869);">1.UTA Overview</span><span class="t" style="left:507.00px;top:169px;font-size:10.5px;line-height:12px;color:#81858c;transform:scaleX(0.876);">2.Margin Mode</span><span class="t" style="left:587.30px;top:169px;font-size:10.5px;line-height:12px;color:#81858c;transform:scaleX(0.904);">3.Select Collateral</span><span class="t" style="left:683.00px;top:169px;font-size:10.5px;line-height:12px;color:#81858c;transform:scaleX(0.874);">4.Risk Warning</span><span class="t" style="left:1394.00px;top:168px;font-size:9.6px;line-height:11px;color:#121214;-webkit-text-stroke:0.45px #121214;transform:scaleX(0.992);">Check Details</span><span class="t" style="left:185.05px;top:219px;font-size:19px;line-height:21px;color:#121214;font-weight:700;transform:scaleX(0.951);">Unified Trading</span><span class="t" style="left:360.80px;top:224px;font-size:9.9px;line-height:11px;color:#121214;-webkit-text-stroke:0.45px #121214;transform:scaleX(0.941);">Cross Margin</span><span class="t" style="left:1051.30px;top:224px;font-size:10.2px;line-height:11px;color:#121214;-webkit-text-stroke:0.45px #121214;transform:scaleX(0.933);">Deposit</span><span class="t" style="left:1115.40px;top:224px;font-size:10.2px;line-height:11px;color:#121214;-webkit-text-stroke:0.45px #121214;transform:scaleX(0.924);">Convert</span><span class="t" style="left:1180.00px;top:224px;font-size:10.2px;line-height:11px;color:#121214;-webkit-text-stroke:0.45px #121214;transform:scaleX(0.944);">Repay All</span><span class="t" style="left:1251.50px;top:224px;font-size:10.2px;line-height:11px;color:#121214;-webkit-text-stroke:0.45px #121214;transform:scaleX(0.943);">Transfer</span><span class="t" style="left:1318.50px;top:224px;font-size:10.2px;line-height:11px;color:#121214;-webkit-text-stroke:0.45px #121214;transform:scaleX(0.972);">Borrow</span><span class="t" style="left:1382.00px;top:224px;font-size:10.2px;line-height:11px;color:#121214;-webkit-text-stroke:0.45px #121214;transform:scaleX(0.937);">History Records</span><span class="t" style="left:1345.50px;top:259px;font-size:10px;line-height:11px;color:#81858c;">Margin Trading on Spot</span><span class="t" style="left:185.90px;top:261px;font-size:10.2px;line-height:11px;color:#81858c;transform:scaleX(1.108);">IM</span><span class="t" style="left:185.90px;top:279px;font-size:10.2px;line-height:11px;color:#81858c;transform:scaleX(0.995);">MM</span><span class="t" style="left:306.80px;top:261px;font-size:11.2px;line-height:12px;color:#20b26c;transform:scaleX(1.035);">0.46%</span><span class="t" style="left:306.80px;top:279px;font-size:11.2px;line-height:12px;color:#20b26c;transform:scaleX(1.020);">0.05%</span><span class="t" style="left:347.10px;top:261px;font-size:11.2px;line-height:12px;color:#121214;-webkit-text-stroke:0.12px #121214;">473.66 USD</span><span class="t" style="left:347.10px;top:279px;font-size:11.2px;line-height:12px;color:#121214;-webkit-text-stroke:0.12px #121214;transform:scaleX(0.968);">52.67 USD</span><span class="t" style="left:185.20px;top:313px;font-size:11px;line-height:12px;color:#81858c;transform:scaleX(1.004);">Total Equity</span><span class="t" style="left:267.30px;top:313px;font-size:11px;line-height:12px;color:#d98210;font-weight:700;transform:scaleX(0.750);">P&amp;L</span><span class="t" style="left:186.00px;top:336px;font-size:19px;line-height:21px;color:#121214;font-weight:700;transform:scaleX(1.052);">231,392.08</span><span class="t" style="left:290.80px;top:343px;font-size:10.6px;line-height:12px;color:#121214;-webkit-text-stroke:0.12px #121214;transform:scaleX(0.889);">USD</span><span class="t" style="left:507.40px;top:311px;font-size:11px;line-height:12px;color:#81858c;transform:scaleX(0.968);">Margin Balance</span><span class="t" style="left:506.95px;top:334px;font-size:19px;line-height:21px;color:#121214;font-weight:700;transform:scaleX(1.052);">101,325.28</span><span class="t" style="left:612.40px;top:341px;font-size:10.6px;line-height:12px;color:#121214;-webkit-text-stroke:0.12px #121214;transform:scaleX(0.902);">USD</span><span class="t" style="left:828.60px;top:311px;font-size:11px;line-height:12px;color:#81858c;transform:scaleX(0.976);">Unrealized PnL of Perpetual and Futures</span><span class="t" style="left:829.00px;top:333px;font-size:19px;line-height:21px;color:#121214;font-weight:700;transform:scaleX(1.022);">0.00</span><span class="t" style="left:873.20px;top:340px;font-size:10.6px;line-height:12px;color:#121214;-webkit-text-stroke:0.12px #121214;transform:scaleX(0.867);">USD</span><span class="t" style="left:211.00px;top:408px;font-size:10.4px;line-height:11px;color:#a9acb2;transform:scaleX(0.854);">Search</span><span class="t" style="left:370.70px;top:407px;font-size:10.6px;line-height:12px;color:#3a3d44;-webkit-text-stroke:0.12px #3a3d44;transform:scaleX(0.864);">Hide Zero Balances</span><span class="t" style="left:481.00px;top:407px;font-size:10.6px;line-height:12px;color:#3a3d44;-webkit-text-stroke:0.12px #3a3d44;transform:scaleX(0.882);">Hide Cleared Liabilities</span><span class="t" style="left:589.50px;top:407px;font-size:10.6px;line-height:12px;color:#d98210;transform:scaleX(0.936);">Convert Small Balances</span><span class="t" style="left:1288.40px;top:402px;font-size:10.3px;line-height:11px;color:#2b2e33;-webkit-text-stroke:0.12px #2b2e33;transform:scaleX(0.884);">HODL USDtb to Enjoy Up to 0.02%</span><span class="t" style="left:1288.40px;top:414px;font-size:10.3px;line-height:11px;color:#2b2e33;-webkit-text-stroke:0.12px #2b2e33;transform:scaleX(0.803);">APR!</span><span class="t" style="left:191.50px;top:455px;font-size:10.3px;line-height:11px;color:#81858c;transform:scaleX(0.873);">Currency</span><span class="t" style="left:305.20px;top:455px;font-size:10.3px;line-height:11px;color:#81858c;transform:scaleX(0.862);">Equity</span><span class="t" style="left:539.30px;top:447px;font-size:10.3px;line-height:11px;color:#81858c;transform:scaleX(0.909);">Wallet Balance</span><span class="t" style="left:539.30px;top:459px;font-size:10.3px;line-height:11px;color:#81858c;transform:scaleX(0.929);">(Bonus Inclusive)</span><span class="t" style="left:774.20px;top:455px;font-size:10.3px;line-height:11px;color:#81858c;transform:scaleX(0.921);">Borrowed Amount</span><span class="t" style="left:1008.90px;top:455px;font-size:10.3px;line-height:11px;color:#81858c;transform:scaleX(0.899);">Used As Collateral</span><span class="t" style="left:1438.80px;top:455px;font-size:10.3px;line-height:11px;color:#81858c;transform:scaleX(0.921);">Action</span><span class="t" style="left:219.70px;top:495px;font-size:10.9px;line-height:12px;color:#121214;-webkit-text-stroke:0.12px #121214;transform:scaleX(0.954);">USDT</span><span class="t" style="left:305.10px;top:488px;font-size:11.5px;line-height:12px;color:#121214;-webkit-text-stroke:0.45px #121214;transform:scaleX(1.018);">1,095.5742</span><span class="t" style="left:305.10px;top:502px;font-size:10.6px;line-height:12px;color:#81858c;transform:scaleX(0.887);">≈1,095.74 USD</span><span class="t" style="left:539.30px;top:488px;font-size:11.5px;line-height:12px;color:#121214;-webkit-text-stroke:0.12px #121214;transform:scaleX(0.985);">1,095.5742</span><span class="t" style="left:539.30px;top:502px;font-size:10.6px;line-height:12px;color:#81858c;transform:scaleX(0.862);">Bonus 0.0000 USDT</span><span class="t" style="left:1369.30px;top:495px;font-size:11.5px;line-height:12px;color:#d98210;transform:scaleX(0.958);">Trade</span><span class="t" style="left:1405.20px;top:495px;font-size:11.5px;line-height:12px;color:#d98210;transform:scaleX(0.973);">Transfer</span><span class="t" style="left:219.70px;top:545px;font-size:10.9px;line-height:12px;color:#121214;-webkit-text-stroke:0.12px #121214;transform:scaleX(1.042);">USDC</span><span class="t" style="left:305.10px;top:538px;font-size:11.5px;line-height:12px;color:#121214;-webkit-text-stroke:0.45px #121214;transform:scaleX(1.034);">-102.511026</span><span class="t" style="left:305.10px;top:552px;font-size:10.6px;line-height:12px;color:#81858c;transform:scaleX(0.878);">≈-102.50 USD</span><span class="t" style="left:539.30px;top:538px;font-size:11.5px;line-height:12px;color:#121214;-webkit-text-stroke:0.12px #121214;transform:scaleX(1.029);">-2.519726</span><span class="t" style="left:539.30px;top:552px;font-size:10.6px;line-height:12px;color:#81858c;transform:scaleX(0.858);">Bonus 0.0000 USDC</span><span class="t" style="left:774.20px;top:543px;font-size:11.5px;line-height:12px;color:#121214;-webkit-text-stroke:0.12px #121214;transform:scaleX(0.860);">102.511026</span><span class="t" style="left:1369.30px;top:544px;font-size:11.5px;line-height:12px;color:#d98210;transform:scaleX(0.958);">Trade</span><span class="t" style="left:1405.20px;top:544px;font-size:11.5px;line-height:12px;color:#d98210;transform:scaleX(0.973);">Transfer</span><span class="t" style="left:219.70px;top:594px;font-size:10.9px;line-height:12px;color:#121214;-webkit-text-stroke:0.12px #121214;transform:scaleX(0.994);">MMNT</span><span class="t" style="left:305.10px;top:587px;font-size:11.5px;line-height:12px;color:#121214;-webkit-text-stroke:0.45px #121214;transform:scaleX(1.018);">100,000.00000000</span><span class="t" style="left:305.10px;top:601px;font-size:10.6px;line-height:12px;color:#81858c;transform:scaleX(0.898);">≈118,918.80 USD</span><span class="t" style="left:539.80px;top:594px;font-size:11.5px;line-height:12px;color:#121214;-webkit-text-stroke:0.12px #121214;transform:scaleX(1.038);">100,000.00000000</span><span class="t" style="left:774.40px;top:594px;font-size:11.5px;line-height:12px;color:#121214;-webkit-text-stroke:0.12px #121214;transform:scaleX(1.062);">0.00000000</span><span class="t" style="left:1405.20px;top:594px;font-size:11.5px;line-height:12px;color:#d98210;transform:scaleX(0.973);">Transfer</span><span class="t" style="left:219.70px;top:644px;font-size:10.9px;line-height:12px;color:#121214;-webkit-text-stroke:0.12px #121214;transform:scaleX(0.958);">BTC</span><span class="t" style="left:305.10px;top:637px;font-size:11.5px;line-height:12px;color:#121214;-webkit-text-stroke:0.45px #121214;transform:scaleX(1.021);">0.99916449</span><span class="t" style="left:305.10px;top:651px;font-size:10.6px;line-height:12px;color:#81858c;transform:scaleX(0.907);">≈111,480.04 USD</span><span class="t" style="left:539.80px;top:644px;font-size:11.5px;line-height:12px;color:#121214;-webkit-text-stroke:0.12px #121214;transform:scaleX(0.985);">0.99916449</span><span class="t" style="left:774.40px;top:644px;font-size:11.5px;line-height:12px;color:#121214;-webkit-text-stroke:0.12px #121214;transform:scaleX(1.062);">0.00000000</span><span class="t" style="left:1369.30px;top:644px;font-size:11.5px;line-height:12px;color:#d98210;transform:scaleX(0.958);">Trade</span><span class="t" style="left:1405.20px;top:644px;font-size:11.5px;line-height:12px;color:#d98210;transform:scaleX(0.973);">Transfer</span><span class="t" style="left:219.70px;top:694px;font-size:10.9px;line-height:12px;color:#121214;-webkit-text-stroke:0.12px #121214;transform:scaleX(1.004);">ETH</span><span class="t" style="left:305.10px;top:687px;font-size:11.5px;line-height:12px;color:#121214;-webkit-text-stroke:0.45px #121214;transform:scaleX(1.021);">0.00000000</span><span class="t" style="left:305.10px;top:701px;font-size:10.6px;line-height:12px;color:#81858c;transform:scaleX(0.848);">≈0.00 USD</span><span class="t" style="left:539.80px;top:694px;font-size:11.5px;line-height:12px;color:#121214;-webkit-text-stroke:0.12px #121214;transform:scaleX(0.985);">0.00000000</span><span class="t" style="left:774.40px;top:694px;font-size:11.5px;line-height:12px;color:#121214;-webkit-text-stroke:0.12px #121214;transform:scaleX(1.062);">0.00000000</span><span class="t" style="left:1369.30px;top:694px;font-size:11.5px;line-height:12px;color:#d98210;transform:scaleX(0.958);">Trade</span><span class="t" style="left:1405.20px;top:694px;font-size:11.5px;line-height:12px;color:#d98210;transform:scaleX(0.973);">Transfer</span><span class="t" style="left:219.70px;top:744px;font-size:10.9px;line-height:12px;color:#121214;-webkit-text-stroke:0.12px #121214;transform:scaleX(0.990);">EOS</span><span class="t" style="left:305.10px;top:737px;font-size:11.5px;line-height:12px;color:#121214;-webkit-text-stroke:0.45px #121214;transform:scaleX(1.013);">0.000000</span><span class="t" style="left:305.10px;top:751px;font-size:10.6px;line-height:12px;color:#81858c;transform:scaleX(0.848);">≈0.00 USD</span><span class="t" style="left:539.80px;top:744px;font-size:11.5px;line-height:12px;color:#121214;-webkit-text-stroke:0.12px #121214;transform:scaleX(0.985);">0.000000</span><span class="t" style="left:774.40px;top:744px;font-size:11.5px;line-height:12px;color:#121214;-webkit-text-stroke:0.12px #121214;transform:scaleX(0.985);">0.000000</span><span class="t" style="left:1369.30px;top:743px;font-size:11.5px;line-height:12px;color:#d98210;transform:scaleX(0.958);">Trade</span><span class="t" style="left:1405.20px;top:743px;font-size:11.5px;line-height:12px;color:#d98210;transform:scaleX(0.973);">Transfer</span><span class="t" style="left:729.70px;top:510px;font-size:11.1px;line-height:12px;color:#2b2e33;-webkit-text-stroke:0.12px #2b2e33;transform:scaleX(0.859);">Spot liabilities: 100.000000USDC</span><div class="a" style="left:707.2px;top:496.2px;width:186.60px;height:35.80px;background:transparent;box-sizing:border-box;border:3.3px solid #ee4646;border-radius:7px"></div><div class="a" style="left:1443.8px;top:734.9px;width:33.40px;height:33.40px;background:#f7a600;border-radius:50%"></div><svg class="a" style="left:1453px;top:744px;" width="16" height="16" viewBox="0 0 16 16"><g fill="none" stroke="#121214" stroke-width="1.25"><path d="M3.600 9V7.400a4.400 4.400 0 0 1 8.800 0V9"/><ellipse cx="3.300" cy="9.600" rx="1.300" ry="1.800"/><ellipse cx="12.700" cy="9.600" rx="1.300" ry="1.800"/><path d="M12.700 11.400c0 1.400-1.400 2.300-3.400 2.300"/></g></svg><div class="a" style="left:5px;top:758px;width:1490.00px;height:29.00px;background:linear-gradient(180deg,rgba(0,0,0,0),rgba(0,0,0,.02) 50%,rgba(0,0,0,.075));"></div></div></div>
</body></html>
